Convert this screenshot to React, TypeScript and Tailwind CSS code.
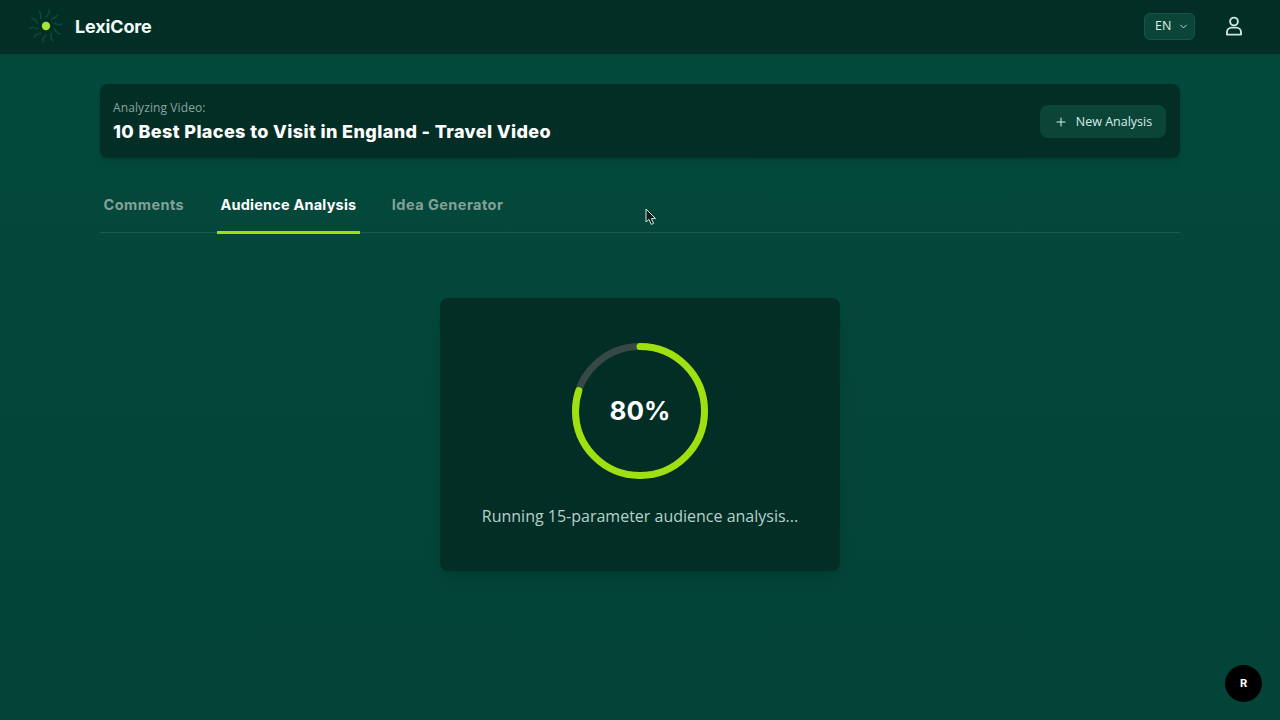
import { ChevronDown, Plus } from "lucide-react";

const TABS = [
  { label: "Comments", active: false },
  { label: "Audience Analysis", active: true },
  { label: "Idea Generator", active: false },
];

const RING_RADIUS = 64.5;
const RING_LENGTH = 2 * Math.PI * RING_RADIUS;

function Logo() {
  const arms = Array.from({ length: 10 }, (_, i) => i * 36);
  return (
    <svg width="36" height="36" viewBox="0 0 36 36" fill="none">
      {arms.map((deg) => (
        <path
          key={deg}
          d="M18 9 C20 7 22 5 21 2"
          stroke="#0a4a3b"
          strokeWidth="1.6"
          strokeLinecap="round"
          transform={`rotate(${deg} 18 18)`}
        />
      ))}
      <circle cx="18" cy="18" r="4.2" fill="#a3e635" />
    </svg>
  );
}

function UserIcon() {
  return (
    <svg width="18" height="20" viewBox="0 0 18 20" fill="none" stroke="#cfe6df" strokeWidth="1.9">
      <circle cx="9" cy="5.5" r="3.9" />
      <path d="M2 18.6 V16.2 C2 13.4 4.2 11.6 6.6 11.6 H11.4 C13.8 11.6 16 13.4 16 16.2 V18.6 Z" strokeLinejoin="round" />
    </svg>
  );
}

function Cursor() {
  return (
    <svg width="12" height="18" viewBox="0 0 12 18" className="absolute left-[645px] top-[208px]">
      <path d="M1 1 V14 L4 11.4 L6.2 16.4 L8.6 15.4 L6.4 10.6 H10.6 Z" fill="#10201c" stroke="#d5e3df" strokeWidth="1" strokeLinejoin="round" />
    </svg>
  );
}

function ProgressRing() {
  return (
    <div className="relative h-[140px] w-[140px]">
      <svg width="140" height="140" viewBox="0 0 140 140" className="-rotate-90">
        <circle cx="70" cy="70" r={RING_RADIUS} fill="none" stroke="#374945" strokeWidth="7" />
        <circle
          cx="70"
          cy="70"
          r={RING_RADIUS}
          fill="none"
          stroke="#9fe010"
          strokeWidth="7"
          strokeLinecap="round"
          strokeDasharray={`${RING_LENGTH * 0.8} ${RING_LENGTH}`}
        />
      </svg>
      <div className="absolute inset-0 flex items-center justify-center pb-[2px] font-['Inter',sans-serif] text-[26px] font-bold text-white">
        80%
      </div>
    </div>
  );
}

export default function App() {
  return (
    <div className="relative h-[720px] w-[1280px] overflow-hidden bg-linear-to-b from-[#034a3c] to-[#034338] font-['Open_Sans',sans-serif]">
      <header className="flex h-[55px] items-center justify-between border-b border-[#0a4236] bg-[#032e26] pb-[2px] pl-[28px] pr-[37px]">
        <div className="flex items-center gap-[11px]">
          <Logo />
          <span className="font-['Inter',sans-serif] text-[18px] font-bold tracking-[-0.15px] text-[#f2fbf8]">LexiCore</span>
        </div>
        <div className="flex items-center gap-[30px]">
          <div className="flex h-[27px] w-[51px] items-center gap-[7px] rounded-md border border-[#14574a] bg-[#0a4538] pl-[10px] pt-px text-[12.5px] text-[#dcefe9]">
            EN
            <ChevronDown size={11} strokeWidth={2} className="text-[#cfe6df]" />
          </div>
          <UserIcon />
        </div>
      </header>

      <main className="px-[100px] pt-[29px]">
        <section className="flex h-[74px] items-center justify-between rounded-lg bg-[#032e26] pl-[13px] pr-[14px] shadow-md">
          <div>
            <div className="text-[12px] leading-[18px] tracking-[0.1px] text-[#8aa59d]">Analyzing Video:</div>
            <h1 className="mt-[3px] font-['Inter',sans-serif] text-[18px] font-extrabold leading-[24px] tracking-[0.38px] text-white">
              10 Best Places to Visit in England - Travel Video
            </h1>
          </div>
          <button className="flex h-[33px] w-[126px] items-center justify-center gap-[8px] rounded-lg bg-[#0a4538] pt-[2px] text-[12.5px] text-[#d9ede7]">
            <Plus size={14} strokeWidth={1.75} />
            New Analysis
          </button>
        </section>

        <nav className="mt-[28px] flex h-[47px] gap-[28.5px] border-b border-[#1c5a4d]">
          {TABS.map((tab) => (
            <div
              key={tab.label}
              className={`-mb-px flex h-[48px] min-w-[88.5px] items-start px-[3.5px] pt-[8px] font-['Inter',sans-serif] text-[14.5px] font-bold ${
                tab.active ? "border-b-[3px] border-[#9fe010] tracking-[0.2px] text-white" : "tracking-[0.45px] text-[#84a199]"
              }`}
            >
              {tab.label}
            </div>
          ))}
        </nav>

        <section className="mx-auto mt-[65px] flex h-[273px] w-[400px] flex-col items-center rounded-lg bg-[#032e26] pt-[43px] shadow-lg">
          <ProgressRing />
          <p className="mt-[23px] text-[16px] leading-[24px] text-[#b5d2ca]">Running 15-parameter audience analysis...</p>
        </section>
      </main>

      <Cursor />

      <div className="absolute bottom-[18px] right-[18px] flex h-[37px] w-[37px] items-center justify-center rounded-full bg-black font-['Inter',sans-serif] text-[11px] font-bold text-white">
        R
      </div>
    </div>
  );
}
